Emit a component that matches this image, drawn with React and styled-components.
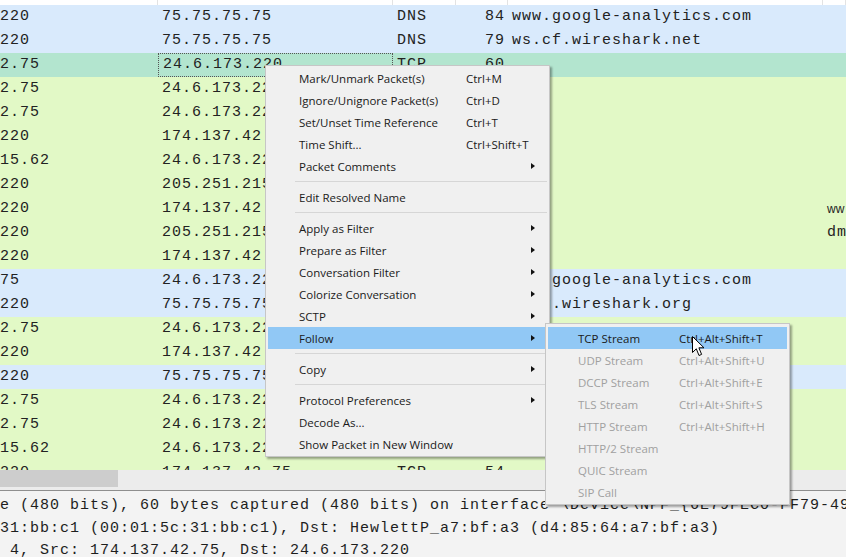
import React from "react";
import styled, { createGlobalStyle } from "styled-components";

const GlobalStyle = createGlobalStyle`
  html, body {
    margin: 0;
    padding: 0;
    background: #ffffff;
    overflow: hidden;
  }
`;

const packets = [
  { src: "220", dst: "75.75.75.75", proto: "DNS", len: "84", info: "www.google-analytics.com", kind: "udp" },
  { src: "220", dst: "75.75.75.75", proto: "DNS", len: "79", info: "ws.cf.wireshark.net", kind: "udp" },
  { src: "2.75", dst: "24.6.173.220", proto: "TCP", len: "60", kind: "selected", focus: true },
  { src: "2.75", dst: "24.6.173.220", proto: "TCP", len: "60", kind: "tcp" },
  { src: "2.75", dst: "24.6.173.220", proto: "TCP", len: "60", kind: "tcp" },
  { src: "220", dst: "174.137.42.75", proto: "TCP", len: "54", kind: "tcp" },
  { src: "15.62", dst: "24.6.173.220", proto: "TCP", len: "60", kind: "tcp" },
  { src: "220", dst: "205.251.215.62", proto: "TCP", len: "54", kind: "tcp" },
  { src: "220", dst: "174.137.42.75", proto: "TCP", len: "54", kind: "tcp", extra: "ww", small: true },
  { src: "220", dst: "205.251.215.62", proto: "TCP", len: "54", kind: "tcp", extra: "dm" },
  { src: "220", dst: "174.137.42.75", proto: "TCP", len: "54", kind: "tcp" },
  { src: "75", dst: "24.6.173.220", proto: "DNS", len: "84", info: "www.google-analytics.com", kind: "udp" },
  { src: "220", dst: "75.75.75.75", proto: "DNS", len: "77", info: "blog.wireshark.org", kind: "udp" },
  { src: "2.75", dst: "24.6.173.220", proto: "TCP", len: "60", kind: "tcp" },
  { src: "220", dst: "174.137.42.75", proto: "TCP", len: "54", kind: "tcp" },
  { src: "220", dst: "75.75.75.75", proto: "DNS", len: "79", kind: "udp" },
  { src: "2.75", dst: "24.6.173.220", proto: "TCP", len: "60", kind: "tcp" },
  { src: "2.75", dst: "24.6.173.220", proto: "TCP", len: "60", kind: "tcp" },
  { src: "15.62", dst: "24.6.173.220", proto: "TCP", len: "60", kind: "tcp" },
  { src: "220", dst: "174.137.42.75", proto: "TCP", len: "54", kind: "tcp" },
];

const rowColors = {
  udp: "#d9eafc",
  tcp: "#e2f9c6",
  selected: "#b3e5cf",
};

const menuItems = [
  { label: "Mark/Unmark Packet(s)", key: "Ctrl+M" },
  { label: "Ignore/Unignore Packet(s)", key: "Ctrl+D" },
  { label: "Set/Unset Time Reference", key: "Ctrl+T" },
  { label: "Time Shift...", key: "Ctrl+Shift+T" },
  { label: "Packet Comments", sub: true },
  { sep: true },
  { label: "Edit Resolved Name" },
  { sep: true },
  { label: "Apply as Filter", sub: true },
  { label: "Prepare as Filter", sub: true },
  { label: "Conversation Filter", sub: true },
  { label: "Colorize Conversation", sub: true },
  { label: "SCTP", sub: true },
  { label: "Follow", sub: true, active: true },
  { sep: true },
  { label: "Copy", sub: true },
  { sep: true },
  { label: "Protocol Preferences", sub: true },
  { label: "Decode As..." },
  { label: "Show Packet in New Window" },
];

const followItems = [
  { label: "TCP Stream", key: "Ctrl+Alt+Shift+T", active: true },
  { label: "UDP Stream", key: "Ctrl+Alt+Shift+U", disabled: true },
  { label: "DCCP Stream", key: "Ctrl+Alt+Shift+E", disabled: true },
  { label: "TLS Stream", key: "Ctrl+Alt+Shift+S", disabled: true },
  { label: "HTTP Stream", key: "Ctrl+Alt+Shift+H", disabled: true },
  { label: "HTTP/2 Stream", disabled: true },
  { label: "QUIC Stream", disabled: true },
  { label: "SIP Call", disabled: true },
];

const details = [
  "e (480 bits), 60 bytes captured (480 bits) on interface \\Device\\NPF_{6E79FEC0-FF79-49",
  "31:bb:c1 (00:01:5c:31:bb:c1), Dst: HewlettP_a7:bf:a3 (d4:85:64:a7:bf:a3)",
  " 4, Src: 174.137.42.75, Dst: 24.6.173.220",
];

const App = () => {
  return (
    <Screen>
      <GlobalStyle />
      <HeaderStrip>
        <HeaderCell />
        <HeaderCell />
        <HeaderCell />
        <HeaderCell />
        <HeaderCell />
        <HeaderCell />
      </HeaderStrip>

      <PacketList>
        {packets.map((p, i) => (
          <Row key={i} $kind={p.kind}>
            <Cell>{p.src}</Cell>
            <Cell $focused={p.focus}>{p.dst}</Cell>
            <Cell>{p.proto}</Cell>
            <Cell $right>{p.len}</Cell>
            <Cell>{p.info || ""}</Cell>
            <Cell $small={p.small}>{p.extra || ""}</Cell>
          </Row>
        ))}
      </PacketList>

      <HScroll>
        <Thumb />
      </HScroll>
      <Splitter />

      <Details>
        {details.map((line, i) => (
          <DetailLine key={i}>{line}</DetailLine>
        ))}
      </Details>

      <Menu>
        {menuItems.map((m, i) =>
          m.sep ? (
            <Separator key={i} />
          ) : (
            <MenuItem key={i} $active={m.active}>
              <Label>{m.label}</Label>
              <Shortcut>{m.key || ""}</Shortcut>
              <ArrowSlot>{m.sub && <Arrow />}</ArrowSlot>
            </MenuItem>
          )
        )}
      </Menu>

      <SubMenu>
        {followItems.map((m, i) => (
          <SubItem key={i} $active={m.active} $disabled={m.disabled}>
            <SubLabel>{m.label}</SubLabel>
            <Shortcut>{m.key || ""}</Shortcut>
          </SubItem>
        ))}
      </SubMenu>

      <Cursor width="13" height="21" viewBox="0 0 13 21">
        <path
          d="M0.5 0.5 L0.5 16.5 L4.3 12.8 L7 19.5 L9.6 18.4 L6.9 11.8 L12 11.8 Z"
          fill="#ffffff"
          stroke="#000000"
          strokeWidth="1"
          strokeLinejoin="miter"
        />
      </Cursor>
    </Screen>
  );
};

const Screen = styled.div`
  position: relative;
  width: 846px;
  height: 557px;
  overflow: hidden;
  display: flex;
  flex-direction: column;
  background: #ffffff;
`;

const columns = "158px 235px 63px 52px 315px 1fr";

const HeaderStrip = styled.div`
  height: 5px;
  display: grid;
  grid-template-columns: ${columns};
  background: #ffffff;
  flex-shrink: 0;
`;

const HeaderCell = styled.div`
  border-right: 1px solid #e3e3e3;
`;

const PacketList = styled.div`
  height: 465px;
  overflow: hidden;
  flex-shrink: 0;
`;

const Row = styled.div`
  display: grid;
  grid-template-columns: ${columns};
  height: 24px;
  background: ${({ $kind }) => rowColors[$kind]};
  font-family: "Liberation Mono", monospace;
  font-size: 15px;
  letter-spacing: 1px;
  color: #222222;
`;

const Cell = styled.div`
  box-sizing: border-box;
  line-height: ${({ $focused }) => ($focused ? "22px" : "24px")};
  white-space: pre;
  overflow: hidden;
  padding: 0 3px 0 4px;
  text-align: ${({ $right }) => ($right ? "right" : "left")};
  border: ${({ $focused }) => ($focused ? "1px dotted #555555" : "none")};
  font-family: ${({ $small }) =>
    $small ? '"Liberation Sans", sans-serif' : "inherit"};
  font-size: ${({ $small }) => ($small ? "12px" : "inherit")};
  letter-spacing: ${({ $small }) => ($small ? "0" : "inherit")};

  &:first-child {
    padding-left: 0;
  }
`;

const HScroll = styled.div`
  height: 17px;
  background: #ececec;
  flex-shrink: 0;
  display: flex;
`;

const Thumb = styled.div`
  width: 118px;
  background: #cdcdcd;
`;

const Splitter = styled.div`
  height: 3px;
  background: #ececec;
  border-bottom: 1px solid #8e8e8e;
  flex-shrink: 0;
`;

const Details = styled.div`
  flex: 1;
  background: #f3f3f3;
  padding-top: 4px;
  font-family: "Liberation Mono", monospace;
  font-size: 15px;
  letter-spacing: 1px;
  color: #1e1e1e;
`;

const DetailLine = styled.div`
  line-height: 22.5px;
  white-space: pre;
`;

const Menu = styled.div`
  position: absolute;
  left: 265px;
  top: 65px;
  width: 285px;
  box-sizing: border-box;
  padding: 1px 2px;
  background: #f0f0f0;
  border: 1px solid #c6c6c6;
  box-shadow: 2px 2px 2px rgba(0, 0, 0, 0.35);
  font-family: "Open Sans", "Noto Sans", sans-serif;
  font-size: 11.5px;
  color: #1a1a1a;
`;

const MenuItem = styled.div`
  display: flex;
  align-items: center;
  height: 22px;
  padding-left: 31px;
  padding-right: 4px;
  background: ${({ $active }) => ($active ? "#91c8f5" : "transparent")};
`;

const Label = styled.span`
  width: 167px;
  flex-shrink: 0;
  white-space: nowrap;
`;

const Shortcut = styled.span`
  flex: 1;
  min-width: 0;
  white-space: nowrap;
`;

const ArrowSlot = styled.span`
  width: 20px;
  flex-shrink: 0;
  display: flex;
  justify-content: center;
`;

const Arrow = styled.span`
  width: 0;
  height: 0;
  border-left: 4px solid #111111;
  border-top: 3.5px solid transparent;
  border-bottom: 3.5px solid transparent;
`;

const Separator = styled.div`
  height: 9px;
  display: flex;
  align-items: center;
  padding-left: 27px;

  &::after {
    content: "";
    flex: 1;
    height: 1px;
    background: #d6d6d6;
  }
`;

const SubMenu = styled.div`
  position: absolute;
  left: 545px;
  top: 323px;
  width: 245px;
  box-sizing: border-box;
  padding: 3px 2px 1px;
  background: #f0f0f0;
  border: 1px solid #c6c6c6;
  box-shadow: 2px 2px 2px rgba(0, 0, 0, 0.35);
  font-family: "Open Sans", "Noto Sans", sans-serif;
  font-size: 11.5px;
  color: #1a1a1a;
`;

const SubItem = styled.div`
  display: flex;
  align-items: center;
  height: 22px;
  padding-left: 30px;
  background: ${({ $active }) => ($active ? "#91c8f5" : "transparent")};
  color: ${({ $disabled }) => ($disabled ? "#a0a0a0" : "#1a1a1a")};
`;

const SubLabel = styled.span`
  width: 101px;
  flex-shrink: 0;
  white-space: nowrap;
`;

const Cursor = styled.svg`
  position: absolute;
  left: 692px;
  top: 336px;
`;

export default App;
